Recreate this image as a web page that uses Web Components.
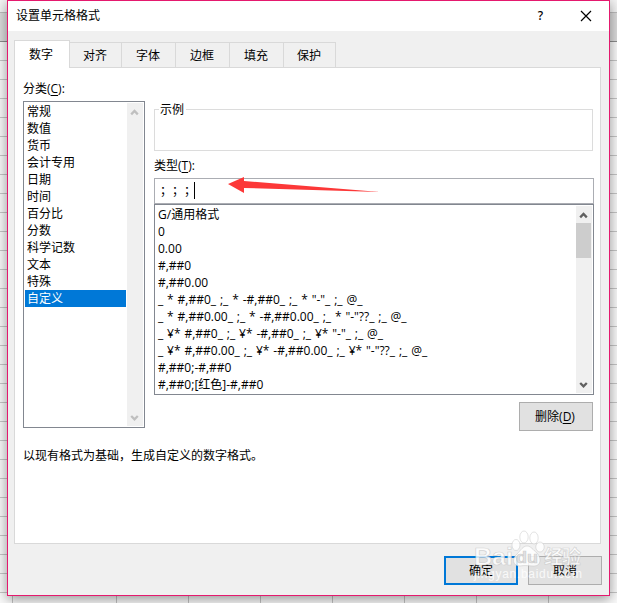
<!DOCTYPE html>
<html lang="zh-CN">
<head>
<meta charset="utf-8">
<title>设置单元格格式</title>
<style>
html,body{margin:0;width:617px;height:603px;overflow:hidden}
body{font:12px/17px "Open Sans","Noto Sans CJK SC",sans-serif;color:#000;text-spacing-trim:space-all}
</style>
</head>
<body>
<sheet-backdrop><format-dialog></format-dialog></sheet-backdrop>
<script>
class Base extends HTMLElement{
  constructor(){super();this.attachShadow({mode:'open'}).innerHTML=this.view();}
}
customElements.define('sheet-backdrop',class extends Base{view(){return `
<style>
:host{display:block;position:relative;box-sizing:border-box;width:617px;height:603px;padding-left:7px;overflow:hidden;background:#f4f4f4}
svg{position:absolute;left:0;top:0}
::slotted(*){position:relative}
</style>
<svg width="617" height="603" shape-rendering="crispEdges">
<defs><pattern id="r" y="3" width="617" height="19" patternUnits="userSpaceOnUse"><rect width="617" height="1" fill="#c6c6c6"/></pattern></defs>
<rect y="42" width="617" height="561" fill="#fafafa"/>
<rect y="60" width="617" height="543" fill="url(#r)"/>
<rect y="12" width="617" height="30" fill="#dcdcdc"/><rect y="12" width="617" height="1" fill="#bdbdbd"/><rect y="41" width="617" height="1" fill="#8c8c8c"/>
<path d="M12.5 590V603M116.5 590V603M188.5 590V603M260.5 590V603M332.5 590V603M404.5 590V603M476.5 590V603M548.5 590V603" stroke="#c2c2c2"/>
</svg><slot></slot>`}});

customElements.define('tab-strip',class extends Base{view(){return `
<style>
:host{display:flex;align-items:flex-end;height:28px;margin-bottom:-1px;position:relative}
span{box-sizing:border-box;height:26px;border:1px solid #d9d9d9;border-left:0;background:#f0f0f0;text-align:center;line-height:26px;width:54px;padding-right:1px}
.a{height:28px;width:56px;border-left:1px solid #d9d9d9;border-bottom:0;background:#fff;line-height:28px;padding-right:2px}
</style>
<span class="a">数字</span><span style="width:52px">对齐</span><span>字体</span><span>边框</span><span>填充</span><span style="width:52px">保护</span>`}});

customElements.define('scroll-bar',class extends Base{view(){return `
<style>
:host{display:flex;flex-direction:column;width:16px;background:#f0f0f0;color:#bfbfbf}
svg{display:block;width:16px;height:17px;flex:none}
path{fill:none;stroke:currentColor;stroke-width:2.3}
.m{flex:1}
i{display:block;width:15px;height:35px;background:#cdcdcd}
:host(:not([thumb])) i{display:none}
:host([thumb]){color:#606060}
</style>
<svg><path d="M4.2 11.4L7.5 8L10.8 11.4"/></svg><div class="m"><i></i></div><svg><path d="M4.2 7L7.5 10.4L10.8 7"/></svg>`}});

customElements.define('list-item',class extends Base{view(){return `
<style>
:host{display:block;height:17px;line-height:17px;padding-left:2px;white-space:nowrap;word-spacing:.75px}
:host([selected]){background:#0078d7;color:#fff}
</style><slot></slot>`}});

customElements.define('list-box',class extends Base{
view(){return `
<style>
:host{display:flex;box-sizing:border-box;border:1px solid #828790;background:#fff;padding:1px}
.items{flex:1;min-width:0;overflow:hidden;margin-right:1px}
</style><div class="items"><slot></slot></div><scroll-bar></scroll-bar>`}
connectedCallback(){this.shadowRoot.querySelector('scroll-bar').toggleAttribute('thumb',this.hasAttribute('thumb'));}
});

customElements.define('push-button',class extends Base{view(){return `
<style>
:host{display:flex;box-sizing:border-box;width:74px;height:29px;align-items:center;justify-content:center;border:1px solid #adadad;background:#e1e1e1}
:host([primary]){border:2px solid #0078d7}
</style><span><slot></slot></span>`}});

customElements.define('brand-watermark',class extends Base{view(){return `
<style>
:host{display:block;pointer-events:none}
svg{display:block;overflow:visible}
</style>
<svg width="112" height="54" fill="#fff" fill-opacity=".82" stroke="#bbb" stroke-opacity=".6" stroke-width=".7">
<ellipse cx="42" cy="17" rx="4" ry="5.5"/><ellipse cx="50" cy="9" rx="4.2" ry="6"/><ellipse cx="60" cy="10" rx="4.2" ry="6"/><ellipse cx="66" cy="19" rx="4.2" ry="5"/>
<path d="M53 18C57 18 59 22 63 25C67 29 68 38 60 38C56 38 51 37 46 38C38 38 38 30 43 26C47 22 49 18 53 18Z"/>
<text x="0" y="37" font-family="Liberation Sans" font-weight="700" font-size="24" textLength="39" lengthAdjust="spacingAndGlyphs">Bai</text>
<text x="42" y="35" font-family="Liberation Sans" font-weight="700" font-size="16" textLength="22" lengthAdjust="spacingAndGlyphs" style="fill:#ddd">du</text>
<text x="70" y="36" font-family="Noto Sans CJK SC" font-weight="700" font-size="19" textLength="37">经验</text>
<text x="0" y="50" font-family="Liberation Sans" font-size="12" textLength="108" lengthAdjust="spacing" stroke="none">jingyan.baidu.com</text>
</svg>`}});

customElements.define('format-dialog',class extends Base{view(){return `
<style>
:host{display:flex;flex-direction:column;box-sizing:border-box;width:603px;height:596px;border:1px solid #e5196e;background:#f0f0f0;box-shadow:0 3px 12px rgba(0,0,0,.42)}
header{display:flex;align-items:center;height:30px;background:#fff;padding:0 17px 0 8px;box-sizing:border-box}
header span{flex:1;padding-bottom:2px}
header svg{display:block}
b{font:500 12px/30px "Noto Sans",sans-serif;margin-right:37px}
main{padding:9px 8px 0 6px}
.panel{box-sizing:border-box;width:587px;height:477px;border:1px solid #d9d9d9;background:#fff;padding:12px 6px 0 8px}
.cols{display:grid;grid-template-columns:122px 440px;column-gap:9px}
.lab{height:17px;display:block}
.cat{width:122px;height:327px;margin-top:4px}
.sample{position:relative;box-sizing:border-box;width:439px;height:42px;border:1px solid #dcdcdc;margin-top:29px}
.sample span{position:absolute;left:4px;top:-9px;background:#fff;padding:0 2px 0 1px;line-height:17px}
.type{margin-top:6px}
.input{box-sizing:border-box;display:flex;align-items:center;position:relative;height:26px;border:1px solid #abadb3;margin-top:4px;padding-left:5px}
.input span{white-space:pre;width:34px;height:20px;line-height:19px}
.input em{width:1px;height:17px;background:#000;margin-bottom:2px}
.arrow{position:absolute;left:73px;top:-3px}
.formats{height:191px}
.del{margin:7px 0 0 365px;width:74px;padding-right:2px}
p{margin:16px 0 0;height:17px}
footer{display:flex;justify-content:flex-end;gap:10px;position:relative;padding:12px 7px 0 0}
brand-watermark{position:absolute;left:466px;top:-16px}
.k{text-decoration:underline;text-underline-offset:2px;text-decoration-thickness:1px}
</style>
<header><span>设置单元格格式</span><b>?</b><svg width="12" height="12"><path d="M1 1L11 11M11 1L1 11" stroke="#000" stroke-width="1.2"/></svg></header>
<main>
<tab-strip></tab-strip>
<div class="panel">
<div class="cols">
<div><span class="lab">分类(<span class="k">C</span>):</span>
<list-box class="cat">${['常规','数值','货币','会计专用','日期','时间','百分比','分数','科学记数','文本','特殊'].map(t=>`<list-item>${t}</list-item>`).join('')}<list-item selected>自定义</list-item></list-box></div>
<div>
<div class="sample"><span>示例</span></div>
<span class="lab type">类型(<span class="k">T</span>):</span>
<div class="input"><span>；；；</span><em></em><svg class="arrow" width="155" height="22"><path d="M0 8L16 1V5L152 16L16 12V17Z" fill="#fc3838"/></svg></div>
<list-box class="formats" thumb>${['G/通用格式','0','0.00','#,##0','#,##0.00','_ * #,##0_ ;_ * -#,##0_ ;_ * "-"_ ;_ @_ ','_ * #,##0.00_ ;_ * -#,##0.00_ ;_ * "-"??_ ;_ @_ ','_ ¥* #,##0_ ;_ ¥* -#,##0_ ;_ ¥* "-"_ ;_ @_ ','_ ¥* #,##0.00_ ;_ ¥* -#,##0.00_ ;_ ¥* "-"??_ ;_ @_ ','#,##0;-#,##0','#,##0;[红色]-#,##0'].map(t=>`<list-item>${t}</list-item>`).join('')}</list-box>
<push-button class="del">删除(<span class="k">D</span>)</push-button>
</div>
</div>
<p>以现有格式为基础，生成自定义的数字格式。</p>
</div>
</main>
<footer><push-button primary>确定</push-button><push-button>取消</push-button><brand-watermark></brand-watermark></footer>`}});
</script>
</body>
</html>
